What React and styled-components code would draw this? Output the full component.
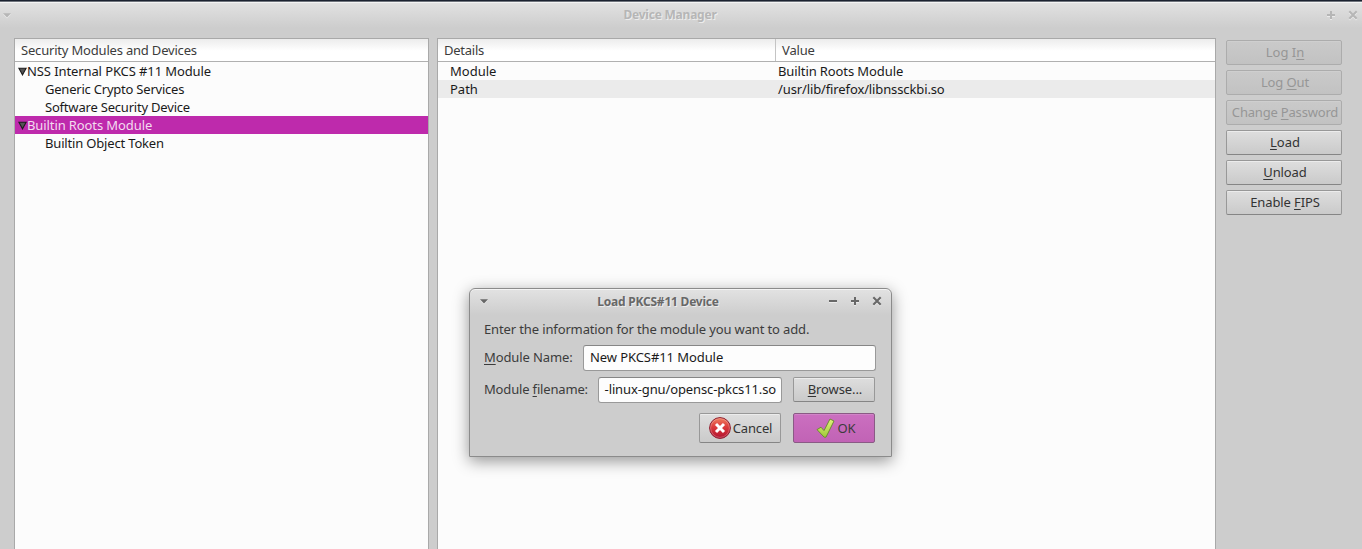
import React from "react";
import styled, { createGlobalStyle } from "styled-components";

const GlobalStyle = createGlobalStyle`
  *, *::before, *::after { box-sizing: border-box; }
  body {
    margin: 0;
    overflow: hidden;
    background: #cdcdcd;
    font: 13px/18px "Noto Sans", "Open Sans", sans-serif;
    color: #3c3c3c;
  }
`;

const Window = styled.div`
  position: relative;
  display: flex;
  flex-direction: column;
  width: 1362px;
  height: 549px;
  overflow: hidden;
  background: #cdcdcd;
  border-top: 1px solid #1b2230;
`;

const TitleBar = styled.header`
  display: flex;
  align-items: center;
  height: 27px;
  padding: 0 4px 0 3px;
  border-top: 1px solid #6f747c;
  box-shadow: inset 0 1px 0 #f4f4f4;
  background: linear-gradient(#e2e2e2, #cdcdcd);
  color: #b6b6b6;
  flex: none;
`;

const Title = styled.h1`
  flex: 1;
  margin: 0;
  padding-top: ${(p) => p.$drop || 0}px;
  padding-left: ${(p) => p.$shift || 0}px;
  font-size: 12px;
  line-height: 18px;
  font-weight: 700;
  letter-spacing: ${(p) => p.$track || 0}px;
  text-align: center;
  text-shadow: 1px 1px 0 rgba(255, 255, 255, 0.6);
  white-space: nowrap;
`;

const WindowControls = styled.div`
  display: flex;
  gap: 12px;
  align-items: center;
`;

const Glyph = styled.svg`
  display: block;
  flex: none;
  filter: drop-shadow(0 1px 0 rgba(255, 255, 255, 0.5));
`;

const Body = styled.main`
  flex: 1;
  display: flex;
  align-items: stretch;
  padding: 10px 20px 0 14px;
  min-height: 0;
`;

const Panel = styled.section`
  width: ${(p) => p.$width}px;
  margin-right: ${(p) => p.$gap}px;
  flex: none;
  border: 1px solid #a9a9a9;
  border-bottom: 0;
  background: #fcfcfc;
  color: #1a1a1a;
`;

const PanelHeader = styled.div`
  display: flex;
  height: 23px;
  border-bottom: 1px solid #b0b0b0;
  background: linear-gradient(#ececec, #ffffff 12px);
  color: #3c3c3c;
`;

const HeaderCell = styled.div`
  width: ${(p) => (p.$width ? p.$width + "px" : "auto")};
  flex: ${(p) => (p.$width ? "none" : 1)};
  padding: 2px 0 0 6px;
  border-left: ${(p) => (p.$divided ? "1px solid #c4c4c4" : "0")};
  letter-spacing: ${(p) => p.$track || 0}px;
  white-space: nowrap;
`;

const TreeRow = styled.div`
  display: flex;
  align-items: center;
  height: 18px;
  padding-left: ${(p) => (p.$child ? 30 : 3)}px;
  background: ${(p) => (p.$selected ? "#be2aac" : "transparent")};
  color: ${(p) => (p.$selected ? "#f3dcf0" : "inherit")};
  letter-spacing: ${(p) => p.$track || 0}px;
  white-space: nowrap;
`;

const Twisty = styled.svg`
  width: 9px;
  height: 9px;
  flex: none;
`;

const DetailRow = styled.div`
  display: flex;
  height: 18px;
  background: ${(p) => (p.$striped ? "#ebebeb" : "transparent")};
`;

const DetailName = styled.span`
  width: 340px;
  padding-left: 12px;
`;

const DetailValue = styled.span`
  letter-spacing: ${(p) => p.$track || 0}px;
  white-space: nowrap;
`;

const ButtonColumn = styled.aside`
  display: flex;
  flex-direction: column;
  gap: 5px;
  width: 116px;
  padding-top: 2px;
`;

const Button = styled.button`
  display: flex;
  align-items: center;
  justify-content: center;
  gap: 1px;
  flex: none;
  width: ${(p) => p.$width || 116}px;
  height: ${(p) => p.$height || 25}px;
  padding: ${(p) => (p.$height ? "0" : "0 0 1px 2px")};
  border: 1px solid #989898;
  border-bottom-color: #858585;
  border-radius: 2px;
  background: linear-gradient(#dedede, #cacaca);
  box-shadow: inset 0 1px 0 #ececec;
  color: #333;
  font: inherit;
  letter-spacing: ${(p) => p.$track || 0}px;
  white-space: pre;

  &:disabled {
    border-color: #acacac;
    background: linear-gradient(#cacaca, #c2c2c2);
    box-shadow: inset 0 1px 0 #cfcfcf;
    color: #969696;
  }
`;

const PrimaryButton = styled(Button)`
  border-color: #8a5a85;
  background: linear-gradient(#cb6fc0, #c163b5);
  box-shadow: inset 0 1px 0 #d184c8;
  color: #3c3c3c;
`;

const AccessKey = styled.u`
  text-decoration: underline;
  text-decoration-thickness: 1px;
  text-underline-offset: 2px;
  text-decoration-skip-ink: none;
`;

const Dialog = styled.section`
  position: absolute;
  left: 469px;
  top: 287px;
  width: 423px;
  height: 169px;
  border: 1px solid #8b8b8b;
  border-radius: 6px 6px 0 0;
  background: linear-gradient(#e2e2e2, #cdcdcd 26px);
  box-shadow: inset 0 1px 0 #f4f4f4, 0 4px 16px rgba(0, 0, 0, 0.42);
`;

const DialogTitleBar = styled.header`
  display: flex;
  align-items: center;
  height: 24px;
  padding: 0 9px 0 10px;
  color: #686868;
`;

const Form = styled.form`
  display: flex;
  flex-direction: column;
  padding: 7px 15px 0 14px;
`;

const Prompt = styled.p`
  margin: 0 0 7px;
  letter-spacing: ${(p) => p.$track || 0}px;
`;

const Field = styled.div`
  display: flex;
  align-items: flex-start;
  height: 26px;
  margin-bottom: 6px;
`;

const Label = styled.label`
  flex: none;
  width: ${(p) => p.$width}px;
  padding-top: 3px;
  letter-spacing: ${(p) => p.$track || 0}px;
  white-space: nowrap;
`;

const TextBox = styled.div`
  display: flex;
  justify-content: ${(p) => (p.$end ? "flex-end" : "flex-start")};
  width: ${(p) => p.$width}px;
  height: 26px;
  margin-right: ${(p) => (p.$end ? 11 : 0)}px;
  padding: 2px ${(p) => (p.$end ? 5 : 6)}px 0 6px;
  border: 1px solid #999;
  border-top-color: #868686;
  border-radius: 3px;
  background: #fdfdfd;
  color: #1a1a1a;
  letter-spacing: ${(p) => p.$track || 0}px;
  white-space: nowrap;
`;

const Actions = styled.div`
  display: flex;
  justify-content: flex-end;
  gap: 12px;
  padding-top: 4px;
  margin-right: 1px;
`;

const MenuArrow = () => (
  <Glyph width="8" height="5" viewBox="0 0 8 5">
    <path d="M0 .3h8L4 4.6z" fill="currentColor" />
  </Glyph>
);

const Minus = () => (
  <Glyph width="10" height="10" viewBox="0 0 10 10">
    <path d="M1 5h8" stroke="currentColor" strokeWidth="2" />
  </Glyph>
);

const Plus = () => (
  <Glyph width="10" height="10" viewBox="0 0 10 10">
    <path d="M1 5h8M5 1v8" stroke="currentColor" strokeWidth="2" />
  </Glyph>
);

const Cross = () => (
  <Glyph width="10" height="10" viewBox="0 0 10 10">
    <path d="M1.3 1.3l7.4 7.4M8.7 1.3L1.3 8.7" stroke="currentColor" strokeWidth="2.1" />
  </Glyph>
);

const Expander = () => (
  <Twisty viewBox="0 0 9 9">
    <path d="M.9 1.2h7.2L4.5 7.8z" fill="#555" stroke="#1c1c1c" strokeWidth="1.1" />
  </Twisty>
);

const CancelIcon = () => (
  <svg width="24" height="24" viewBox="0 0 24 24">
    <defs>
      <linearGradient id="cancelFill" x1="0" y1="0" x2="0" y2="1">
        <stop offset="0" stopColor="#f08060" />
        <stop offset=".45" stopColor="#dc3c3c" />
        <stop offset="1" stopColor="#b01030" />
      </linearGradient>
    </defs>
    <circle cx="12" cy="12" r="10.4" fill="url(#cancelFill)" stroke="#8e1a2c" />
    <circle cx="12" cy="12" r="9.4" fill="none" stroke="#fff" strokeOpacity=".25" />
    <path d="M8 8l8 8M16 8l-8 8" stroke="#fff" strokeWidth="3" />
  </svg>
);

const OkIcon = () => (
  <svg width="24" height="24" viewBox="0 0 24 24">
    <defs>
      <linearGradient id="okFill" x1="0" y1="0" x2="0" y2="1">
        <stop offset="0" stopColor="#e2f47c" />
        <stop offset="1" stopColor="#a0ca38" />
      </linearGradient>
    </defs>
    <path
      d="M4 13.6l4-2.4 3 3.4L17 3l4 2-8 16.2h-1.8z"
      fill="url(#okFill)"
      stroke="#6c8c34"
      strokeLinejoin="round"
    />
  </svg>
);

const modules = [
  { name: "NSS Internal PKCS #11 Module", track: -0.1 },
  { name: "Generic Crypto Services", child: true, track: -0.22 },
  { name: "Software Security Device", child: true, track: -0.2 },
  { name: "Builtin Roots Module", selected: true, track: -0.1 },
  { name: "Builtin Object Token", child: true, track: -0.17 },
];

const details = [
  { name: "Module", value: "Builtin Roots Module", track: -0.1 },
  { name: "Path", value: "/usr/lib/firefox/libnssckbi.so", track: -0.12 },
];

const commands = [
  { parts: ["Log I", "n", ""], disabled: true },
  { parts: ["Log ", "O", "ut"], disabled: true, track: -0.1 },
  { parts: ["Change ", "P", "assword"], disabled: true, track: -0.19 },
  { parts: ["", "L", "oad"] },
  { parts: ["", "U", "nload"], track: -0.1 },
  { parts: ["Enable ", "F", "IPS"], track: -0.12 },
];

const Caption = ({ parts: [before, key, after] }) => (
  <span>
    {before}
    <AccessKey>{key}</AccessKey>
    {after}
  </span>
);

export default function App() {
  return (
    <>
      <GlobalStyle />
      <Window>
        <TitleBar>
          <MenuArrow />
          <Title $shift={3} $track={-0.22}>Device Manager</Title>
          <WindowControls>
            <Plus />
            <Cross />
          </WindowControls>
        </TitleBar>
        <Body>
          <Panel $width={415} $gap={8}>
            <PanelHeader>
              <HeaderCell $track={-0.19}>Security Modules and Devices</HeaderCell>
            </PanelHeader>
            {modules.map((m) => (
              <TreeRow key={m.name} $child={m.child} $selected={m.selected} $track={m.track}>
                {!m.child && <Expander />}
                {m.name}
              </TreeRow>
            ))}
          </Panel>
          <Panel $width={779} $gap={10}>
            <PanelHeader>
              <HeaderCell $width={337} $track={-0.25}>Details</HeaderCell>
              <HeaderCell $divided $track={-0.15}>Value</HeaderCell>
            </PanelHeader>
            {details.map((d, i) => (
              <DetailRow key={d.name} $striped={i % 2 === 1}>
                <DetailName>{d.name}</DetailName>
                <DetailValue $track={d.track}>{d.value}</DetailValue>
              </DetailRow>
            ))}
          </Panel>
          <ButtonColumn>
            {commands.map((c) => (
              <Button key={c.parts.join("")} disabled={c.disabled} $track={c.track}>
                <Caption parts={c.parts} />
              </Button>
            ))}
          </ButtonColumn>
        </Body>
        <Dialog>
          <DialogTitleBar>
            <MenuArrow />
            <Title $drop={2} $track={-0.22}>Load PKCS#11 Device</Title>
            <WindowControls>
              <Minus />
              <Plus />
              <Cross />
            </WindowControls>
          </DialogTitleBar>
          <Form onSubmit={(e) => e.preventDefault()}>
            <Prompt $track={-0.13}>Enter the information for the module you want to add.</Prompt>
            <Field>
              <Label $width={99} $track={-0.1}>
                <Caption parts={["", "M", "odule Name:"]} />
              </Label>
              <TextBox $width={293} $track={-0.08}>New PKCS#11 Module</TextBox>
            </Field>
            <Field>
              <Label $width={114} $track={-0.17}>
                <Caption parts={["Module ", "f", "ilename:"]} />
              </Label>
              <TextBox $width={184} $track={-0.12} $end>
                -linux-gnu/opensc-pkcs11.so
              </TextBox>
              <Button type="button" $width={82} $track={-0.1}>
                <Caption parts={["", "B", "rowse..."]} />
              </Button>
            </Field>
            <Actions>
              <Button type="button" $width={82} $height={30} $track={-0.15}>
                <CancelIcon />
                Cancel
              </Button>
              <PrimaryButton type="submit" $width={82} $height={30} $track={-0.2}>
                <OkIcon />
                OK
              </PrimaryButton>
            </Actions>
          </Form>
        </Dialog>
      </Window>
    </>
  );
}
